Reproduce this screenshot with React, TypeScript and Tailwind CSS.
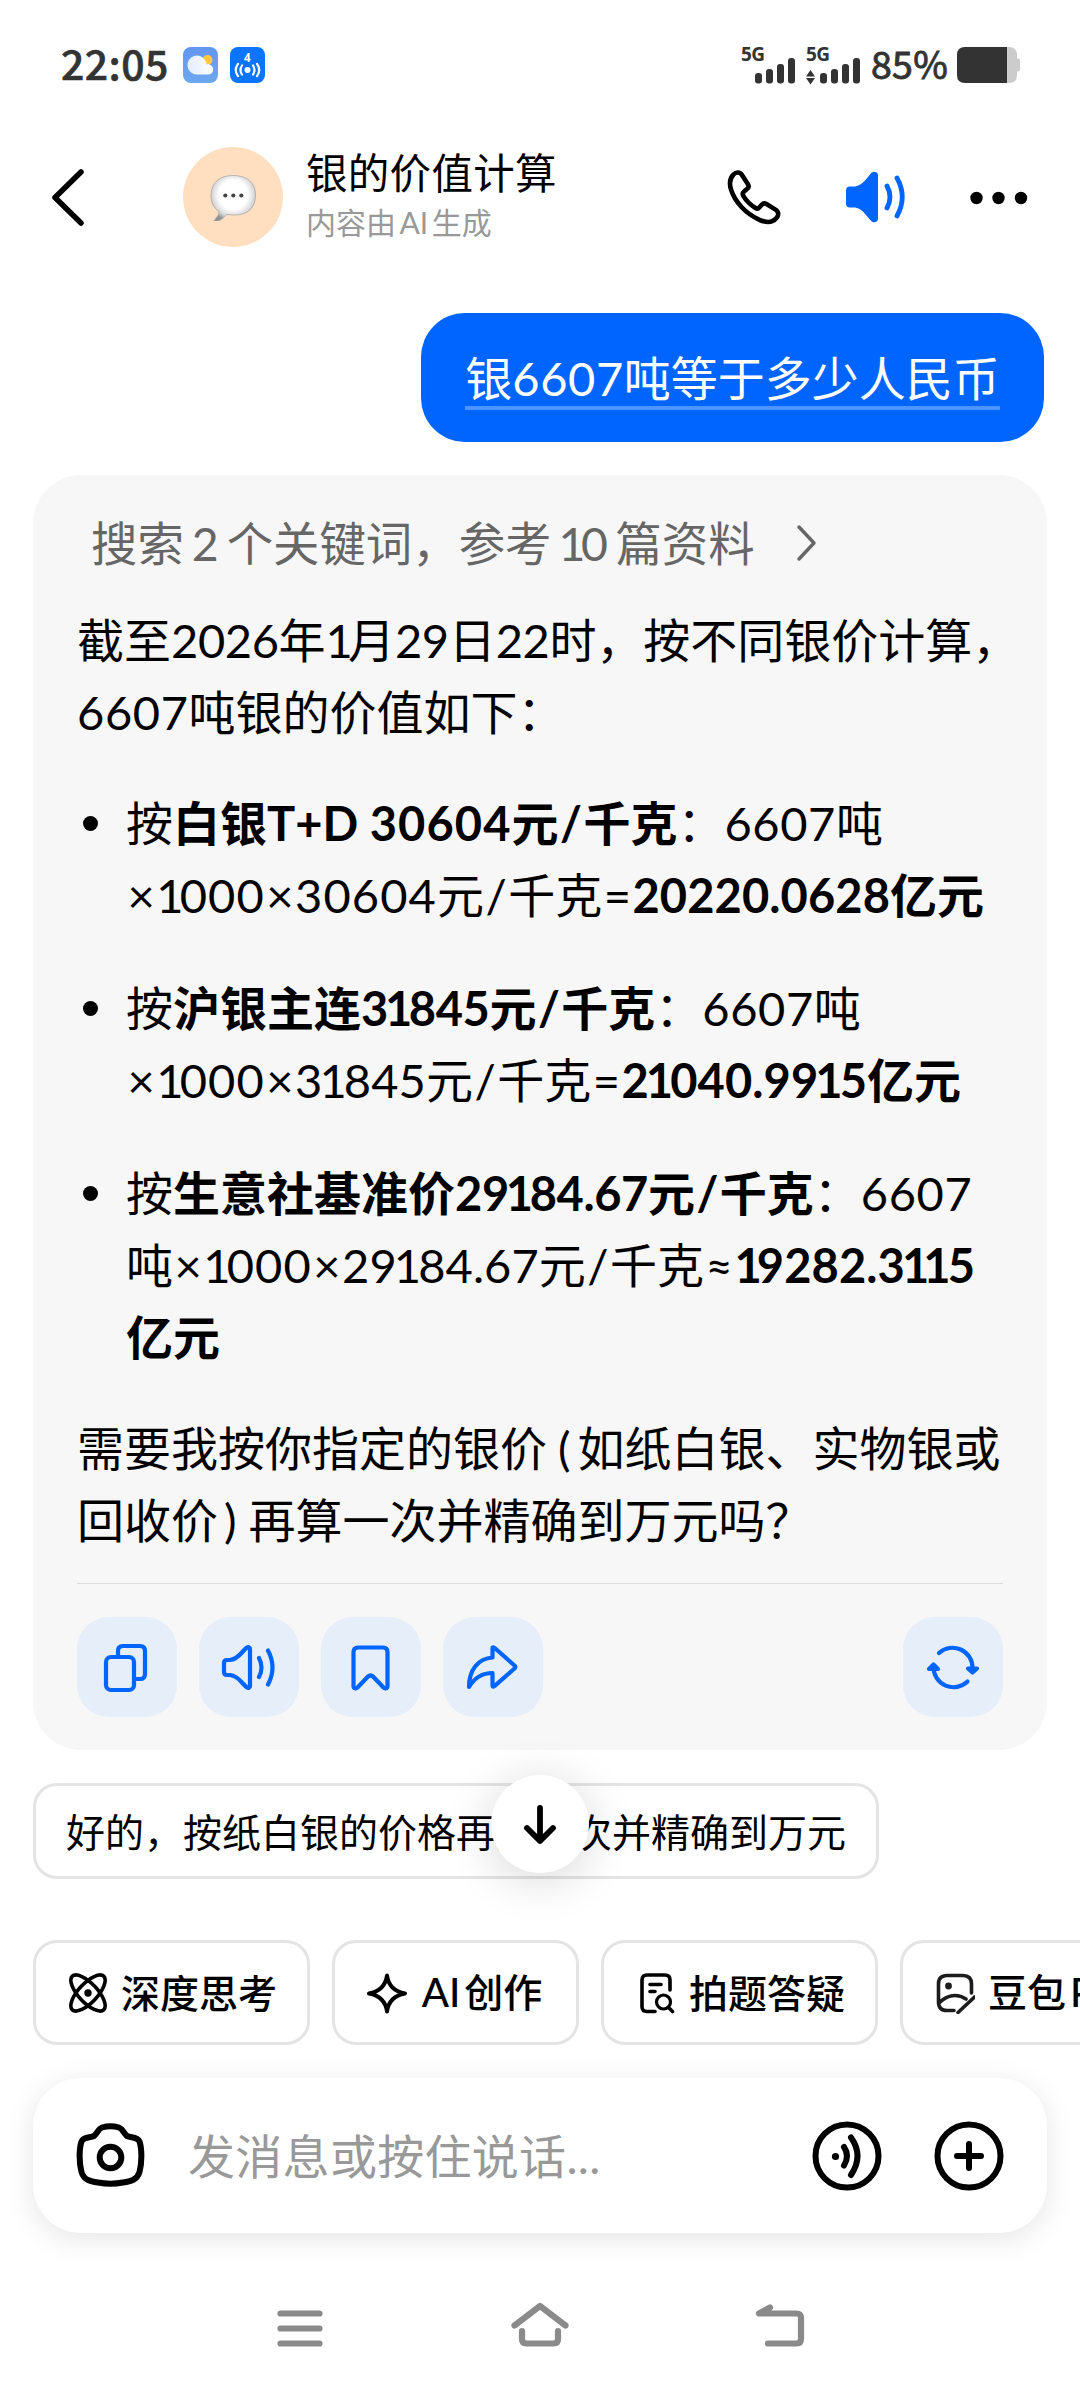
import React from "react";

const body = "font-['Lato','Noto_Sans_CJK_SC',sans-serif]";
const cjk = "font-['Noto_Sans_CJK_SC',sans-serif]";

function Signal({ arrows }: { arrows?: boolean }) {
  return (
    <svg className="overflow-visible" width="55" height="38" viewBox="0 0 55 38" fill="#333">
      <text x="0" y="15" fontSize="19" fontWeight="700" fontFamily="Open Sans, sans-serif" textLength="24">5G</text>
      {arrows && <path d="M0 30.5L4.5 24L9 30.5ZM0 32h9L4.5 38.5Z" />}
      <rect x="14" y="27" width="7" height="10.500" rx="3" />
      <rect x="25" y="23" width="7" height="14.500" rx="3" />
      <rect x="36" y="18" width="7" height="19.500" rx="3" />
      <rect x="47" y="12" width="7" height="25.500" rx="3" />
    </svg>
  );
}

function StatusBar() {
  return (
    <div className={`flex h-[130px] items-center pl-[61px] pr-[59px] text-[#333] ${cjk}`}>
      <span className="mb-[6px] w-[122px] text-[41px] font-medium leading-[60px] tracking-[0.4px] [-webkit-text-stroke:0.6px_#333]">22:05</span>
      <svg width="35" height="36" viewBox="0 0 35 36">
        <defs>
          <linearGradient id="sky" x1="0" y1="0" x2="0" y2="1">
            <stop offset="0" stopColor="#6396f2" />
            <stop offset="1" stopColor="#6ea8f0" />
          </linearGradient>
          <linearGradient id="cloud" x1="0" y1="0" x2="1" y2="0">
            <stop offset="0" stopColor="#e3edfd" />
            <stop offset="1" stopColor="#fff" />
          </linearGradient>
        </defs>
        <rect width="35" height="36" rx="8" fill="url(#sky)" />
        <circle cx="24.500" cy="13" r="5" fill="#ffc93c" />
        <path d="M14 27.500a9.500 9.500 0 1 1 8.500-13.500c.8 1.500 1 2.300 1 3.300 4-.5 6.700 2 6.700 5.200 0 3-2.400 5-5.400 5Z" fill="url(#cloud)" />
      </svg>
      <svg className="ml-[12px]" width="35" height="36" viewBox="0 0 35 36" fill="none" stroke="#fff" strokeWidth="2.200" strokeLinecap="round">
        <rect width="35" height="36" rx="8" fill="#0a75ff" stroke="none" />
        <text x="14" y="14.500" fontSize="11.500" fontWeight="700" fontFamily="Open Sans, sans-serif" fill="#fff" stroke="none">4</text>
        <circle cx="17.500" cy="23" r="3" fill="#fff" stroke="none" />
        <path d="M12 18.500q-3 4.500 0 9M23 18.500q3 4.500 0 9M8 16.800q-4.500 6.200 0 12.400M27 16.800q4.500 6.200 0 12.400" />
      </svg>
      <div className="ml-auto flex items-center">
        <Signal />
        <span className="ml-[10px] flex"><Signal arrows /></span>
        <span className="mb-[4px] ml-[10px] w-[86px] text-[37.500px] font-normal leading-[56px] tracking-[0.300px] [-webkit-text-stroke:0.9px_#333]">85%</span>
        <svg width="64" height="36" viewBox="0 0 64 36">
          <path d="M50 0h2q8 0 8 8v3.500h1q2 0 2 2v9q0 2-2 2h-1V28q0 8-8 8h-2Z" fill="#ccc" />
          <path d="M50 0v36H8q-8 0-8-8V8q0-8 8-8Z" fill="#333" />
        </svg>
      </div>
    </div>
  );
}

function Header() {
  return (
    <div className="flex h-[134px] items-center pl-[50px]">
      <svg width="36" height="60" viewBox="0 0 36 60" fill="none" stroke="#000" strokeWidth="5.500" strokeLinecap="round" strokeLinejoin="round">
        <path d="M31 5L5 30.500L31 56" />
      </svg>
      <div className="ml-[97px] flex size-[100px] items-center justify-center rounded-full bg-[#ffdfc0]">
        <svg width="46" height="48" viewBox="0 0 46 48">
          <defs>
            <radialGradient id="puff" cx="0.5" cy="0.42" r="0.58">
              <stop offset="0.55" stopColor="#fff" />
              <stop offset="0.82" stopColor="#d8d8d8" />
              <stop offset="1" stopColor="#8f8f8f" />
            </radialGradient>
          </defs>
          <path d="M23 2.500C36 2.500 45.500 9 45.500 22S38 42 24 42q-4 0-7-.8C14 45 10 48 5.500 48.500 4 48.500 4 47.500 5 46.500c2.500-3 4-5 4-8C3.500 35 1 29.500 1 22.500 1 9.500 10 2.500 23 2.500Z" fill="url(#puff)" stroke="#a8a8a8" strokeWidth="0.800" />
          <circle cx="15.300" cy="22.500" r="2.100" fill="#444" />
          <circle cx="23.300" cy="22.500" r="2.100" fill="#444" />
          <circle cx="31.300" cy="22.500" r="2.100" fill="#444" />
        </svg>
      </div>
      <div className={`mb-[5px] ml-[23px] w-[252px] whitespace-nowrap ${cjk}`}>
        <div className="text-[41.500px] leading-[55px] tracking-[0.3px] text-black">银的价值计算</div>
        <div className="text-[30px] leading-[45px] text-[#999]">
          内容由<span className="mx-[3.500px] font-['Lato']">AI</span>生成
        </div>
      </div>
      <svg className="ml-[169px]" width="54" height="56" viewBox="0 0 54 56" fill="none" stroke="#000" strokeWidth="4.600" strokeLinejoin="round">
        <path d="M6.500 5.500C9 2.800 13 2.800 15 6l5.800 9c1.300 2 .8 3.800-.8 5l-3 2.600c-1.500 1.200-1.700 2.500-.7 4.200 3 5 7.500 9.200 12.200 12.200 1.500 1 2.800.7 4-.7l2.300-2.600c1.300-1.500 3-1.700 4.700-.7l9 5.600c3.300 2 3.500 5.500 1 8.400-3.800 4.500-10 5-17 1.800C18.500 44.500 8 33 4 20.500c-2-6.500-1-11.500 2.500-15Z" />
      </svg>
      <svg className="ml-[63px]" width="64" height="56" viewBox="0 0 64 56" fill="none" stroke="#0065ff" strokeWidth="4.800" strokeLinecap="round">
        <path d="M6 17.500h5C19 16 22.500 9 27 4.200c2.500-2.700 7-1.700 7 2v43.600c0 3.700-4.500 4.700-7 2C22.500 47 19 40 11 38.500H6q-4 0-4-4v-13q0-4 4-4Z" fill="#0065ff" stroke="none" />
        <path d="M43 17q6 11 0 22M53 9q10.500 19 0 38" />
      </svg>
      <svg className="ml-[61px]" width="60" height="20" viewBox="0 0 60 20">
        <circle cx="7.500" cy="11" r="6.200" />
        <circle cx="29.500" cy="11" r="6.200" />
        <circle cx="52" cy="11" r="6.200" />
      </svg>
    </div>
  );
}

function ActionButton({ children }: { children: React.ReactNode }) {
  return (
    <button className="flex size-[100px] items-center justify-center rounded-[32px] bg-[#e6eef9]">
      <svg width="56" height="56" viewBox="0 0 56 56" fill="none" stroke="#0065ff" strokeWidth="4.200" strokeLinecap="round" strokeLinejoin="round">
        {children}
      </svg>
    </button>
  );
}

/* Evenly spaced figures, with the digit 1 set tighter than the rest. */
function Num({ children, track = "tracking-[0.6px]" }: { children: string; track?: string }) {
  return (
    <span className={track}>
      {children.split("").map((c, i) =>
        c === "1" ? (
          <span key={i} className={i === 0 ? "-mr-[5px]" : "-ml-[3px] -mr-[3px]"}>1</span>
        ) : (
          c
        )
      )}
    </span>
  );
}

const wide = "tracking-[1.1px]";
const snug = "tracking-[0.1px]";
const tight = "tracking-[-0.4px]";

function Op({ children }: { children: string }) {
  return <span className="mx-[1.500px]">{children}</span>;
}

function Item({ children }: { children: React.ReactNode }) {
  return (
    <li className="flex">
      <span className="ml-[6px] mr-[28px] mt-[29px] size-[15px] shrink-0 rounded-full bg-black" />
      <div className="whitespace-nowrap">{children}</div>
    </li>
  );
}

function Answer() {
  return (
    <div className={`mx-[33px] mt-[33px] h-[1275px] rounded-[48px] bg-[#f7f7f7] pl-[44px] pr-[44px] pt-[32px] text-[47px] leading-[72px] text-black tabular-nums ${body}`}>
      <div className="flex items-center whitespace-nowrap pl-[14px] text-[#666]">
        <span className="text-[46.400px]">搜索<span className="mx-[8px]">2</span>个关键词，参考<span className="mx-[7px]"><Num>10</Num></span>篇资料</span>
        <svg className="ml-[40px]" width="24" height="38" viewBox="0 0 24 38" fill="none" stroke="#666" strokeWidth="3.400" strokeLinecap="round" strokeLinejoin="round">
          <path d="M4 3L19 19L4 35" />
        </svg>
      </div>
      <div className="mt-[25px] whitespace-nowrap">
        <p>截至<Num track={tight}>2026</Num>年<Num track={snug}>1</Num>月<Num track={tight}>29</Num>日<Num track={tight}>22</Num>时，按不同银价计算，</p>
        <p><Num>6607</Num>吨银的价值如下：</p>
      </div>
      <ul className="mt-[39px] space-y-[41px]">
        <Item>
          按<b>白银T+D <Num track={wide}>30604</Num>元<Op>/</Op>千克</b>：<Num>6607</Num>吨<br />
          <Op>×</Op><Num track={wide}>1000</Num><Op>×</Op><Num track={wide}>30604</Num>元<Op>/</Op>千克<Op>=</Op><b><Num track={snug}>20220.0628</Num>亿元</b>
        </Item>
        <Item>
          按<b>沪银主连<Num track={tight}>31845</Num>元<Op>/</Op>千克</b>：<Num>6607</Num>吨<br />
          <Op>×</Op><Num track={wide}>1000</Num><Op>×</Op><Num track={snug}>31845</Num>元<Op>/</Op>千克<Op>=</Op><b><Num track={snug}>21040.9915</Num>亿元</b>
        </Item>
        <Item>
          按<b>生意社基准价<Num track={tight}>29184.67</Num>元<Op>/</Op>千克</b>：<Num>6607</Num><br />
          吨<Op>×</Op><Num track={wide}>1000</Num><Op>×</Op><Num track={snug}>29184.67</Num>元<Op>/</Op>千克<Op>≈</Op><b><Num track={snug}>19282.3115</Num></b><br />
          <b>亿元</b>
        </Item>
      </ul>
      <div className="mt-[39px] whitespace-nowrap">
        <p>需要我按你指定的银价<span className="ml-[11px] mr-[7px]">(</span>如纸白银、实物银或</p>
        <p>回收价<span className="ml-[6px] mr-[12px]">)</span>再算一次并精确到万元吗？</p>
      </div>
      <div className="mt-[27px] h-px bg-[#dcdcdc]" />
      <div className="mt-[33px] flex gap-[22px]">
        <ActionButton>
          <rect x="7" y="18" width="28" height="33" rx="5" />
          <path d="M19 18v-6q0-5 5-5h17q5 0 5 5v23q0 5-5 5h-6" />
        </ActionButton>
        <ActionButton>
          <path d="M7 21h3C19 20 22 12 27 8.500c1.500-1 3 0 3 1.500v37c0 1.500-1.500 2.500-3 1.500C22 45 19 37 10 36H7q-3 0-3-3v-9q0-3 3-3ZM39 19q5 9.500 0 19M48 11.500q9 17 0 34" transform="translate(-1 0)" />
        </ActionButton>
        <ActionButton>
          <path d="M15 8.500h25q4.500 0 4.500 4.500V47c0 2.500-2.500 3-4 1.500L30 37.500q-2.500-2-5 0L14.500 48.500c-1.500 1.500-4 1-4-1.500V13Q10.500 8.500 15 8.500Z" />
        </ActionButton>
        <ActionButton>
          <path d="M27.500 9v9.500C13 19.500 4 31 4 48c6-10 13-14 23.500-14v12c0 2 1 2 2.500.7L49.500 29.500q1.500-1.500 0-3L30 9.300Q27.500 7.500 27.500 9Z" />
        </ActionButton>
        <div className="ml-auto">
          <ActionButton>
            <path d="M14 14A20 20 0 0 1 47.500 29M43 29.500l4.500 4 4.500-4ZM42.500 42.500A20 20 0 0 1 8.500 28M4 30l4.500-4.500L13 30Z" />
          </ActionButton>
        </div>
      </div>
    </div>
  );
}

function Suggestion() {
  return (
    <div className="relative mt-[33px] pl-[33px]">
      <div className={`flex h-[96px] w-[846px] items-center justify-center whitespace-nowrap rounded-[24px] border-[3px] border-[#e4e4e4] pb-[3px] text-[39px] leading-[56px] text-black ${cjk}`}>
        好的，按纸白银的价格再算一次并精确到万元
      </div>
      <button className="absolute left-[491px] top-[-8px] flex size-[98px] items-center justify-center rounded-full bg-white shadow-[0_6px_48px_rgba(0,0,0,0.16)]">
        <svg width="40" height="44" viewBox="0 0 40 44" fill="none" stroke="#000" strokeWidth="5.800" strokeLinecap="round" strokeLinejoin="round">
          <path d="M20 6v31M7 26l13 13 13-13" />
        </svg>
      </button>
    </div>
  );
}

function Chip({ icon, children }: { icon: React.ReactNode; children: React.ReactNode }) {
  return (
    <button className="flex h-[105px] shrink-0 items-center gap-[13px] whitespace-nowrap rounded-[24px] border-[3px] border-[#e4e4e4] px-[30px]">
      <svg width="42" height="42" viewBox="0 0 42 42" fill="none" stroke="#000" strokeWidth="3.600" strokeLinecap="round" strokeLinejoin="round">
        {icon}
      </svg>
      <span className="mb-[4px]">{children}</span>
    </button>
  );
}

function Chips() {
  return (
    <div className={`mt-[61px] flex gap-[22px] overflow-hidden pl-[33px] text-[39px] font-medium leading-[56px] text-black ${cjk}`}>
      <Chip
        icon={
          <>
            <ellipse cx="22" cy="21" rx="23" ry="9.500" transform="rotate(47 22 21)" />
            <ellipse cx="22" cy="21" rx="23" ry="9.500" transform="rotate(-47 22 21)" />
            <circle cx="22" cy="21" r="3.700" fill="#000" stroke="none" />
          </>
        }
      >
        深度思考
      </Chip>
      <Chip icon={<path strokeWidth="4" d="M22 3.500Q24 18.500 40 21.500Q24 24.500 22 39.500Q20 24.500 4 21.500Q20 18.500 22 3.500Z" />}>
        <span className="inline-block w-[126px]"><span className="-ml-[2px] mr-[4px] font-['Lato'] text-[40px] font-medium">AI</span>创作</span>
      </Chip>
      <Chip
        icon={
          <>
            <path d="M21 39.500h-8q-5 0-5-5V8q0-5 5-5h18q5 0 5 5v10M16 12.500h11M16 19.500h5" />
            <circle cx="29.500" cy="30" r="7" strokeWidth="3.200" />
            <path d="M34.500 35.500l4 4" />
          </>
        }
      >
        拍题答疑
      </Chip>
      <Chip
        icon={
          <>
            <path stroke="#1c1c1c" d="M21 38.500h-7q-8.500 0-8.500-8.500V12q0-8.500 8.500-8.500h16q8.500 0 8.500 8.500v9M6 31c8-8 18-10 27-4M25 40.500L41.500 25" />
            <circle cx="15.500" cy="14" r="3.400" fill="#1c1c1c" stroke="none" />
          </>
        }
      >
        豆包<span className="ml-[4px] font-['Lato'] text-[40px] font-medium">P图</span>
      </Chip>
    </div>
  );
}

function InputBar() {
  return (
    <div className="mx-[33px] mt-[33px] flex h-[155px] items-center rounded-[48px] bg-white pl-[42px] pr-[41px] shadow-[0_6px_30px_rgba(0,0,0,0.10)]">
      <svg width="72" height="70" viewBox="0 0 72 70" fill="none" stroke="#000" strokeWidth="6" strokeLinejoin="round">
        <path d="M27 6.500C32 5 39 5 44 6.500C48 8 48.500 12.500 52 15C56 17 62 15.500 64.500 20.500C67 28 67 42 64.500 51C62 59.500 55 60.500 48 61.500C40 63 31 63 23 61.500C16 60.500 9 59.500 6.500 51C4 42 4 28 6.500 20.500C9 15.500 15 17 19 15C22.500 12.500 23 8 27 6.500Z" />
        <circle cx="35.500" cy="36.500" r="10.800" />
      </svg>
      <span className={`ml-[41px] text-[47px] leading-[70px] tracking-[0.300px] text-[#999] ${body}`}>发消息或按住说话...</span>
      <svg className="ml-auto" width="74" height="74" viewBox="0 0 74 74" fill="none" stroke="#000" strokeWidth="6" strokeLinecap="round">
        <circle cx="37" cy="37" r="31.500" />
        <circle cx="25.500" cy="37.500" r="3.600" fill="#000" stroke="none" />
        <path d="M34 28q6 9 0 18.500M41 18.500q13 18 0 37.500" />
      </svg>
      <svg className="ml-[48px]" width="74" height="74" viewBox="0 0 74 74" fill="none" stroke="#000" strokeWidth="6" strokeLinecap="round">
        <circle cx="37" cy="37" r="31.500" />
        <path d="M25 37h24M37 25v24" />
      </svg>
    </div>
  );
}

function NavBar() {
  return (
    <div className="mt-[62px] flex justify-center gap-[180px]">
      <svg width="60" height="60" viewBox="0 0 60 60" fill="none" stroke="#8a8a8a" strokeWidth="6.200" strokeLinecap="round">
        <path d="M10.500 18.500h39M10.500 33.500h39M10.500 48.500h39" />
      </svg>
      <svg width="60" height="60" viewBox="0 0 60 60" fill="none" stroke="#8a8a8a" strokeWidth="6.200" strokeLinecap="round" strokeLinejoin="round">
        <path d="M4.500 30.500L30 11L55.500 30.500M12 36v8q0 4.500 4.500 4.500h27q4.500 0 4.500-4.500v-8" />
      </svg>
      <svg width="60" height="60" viewBox="0 0 60 60" fill="none" stroke="#8a8a8a" strokeWidth="6.200" strokeLinecap="round" strokeLinejoin="round">
        <path d="M20 12.500L9 18.500h37.500q4.500 0 4.500 4.500v21q0 4.500-4.500 4.500H18" />
      </svg>
    </div>
  );
}

export default function App() {
  return (
    <div className="h-[2392px] w-[1080px] overflow-hidden bg-white">
      <StatusBar />
      <Header />
      <div className="mt-[49px] flex justify-end pr-[36px]">
        <div className={`flex h-[129px] w-[623px] items-center justify-center whitespace-nowrap rounded-[44px] bg-[#0065ff] pt-[5px] text-[47px] leading-[56px] text-white ${body}`}>
          <span className="border-b-[4px] border-[#4c94ff]">银<Num>6607</Num>吨等于多少人民币</span>
        </div>
      </div>
      <Answer />
      <Suggestion />
      <Chips />
      <InputBar />
      <NavBar />
    </div>
  );
}
